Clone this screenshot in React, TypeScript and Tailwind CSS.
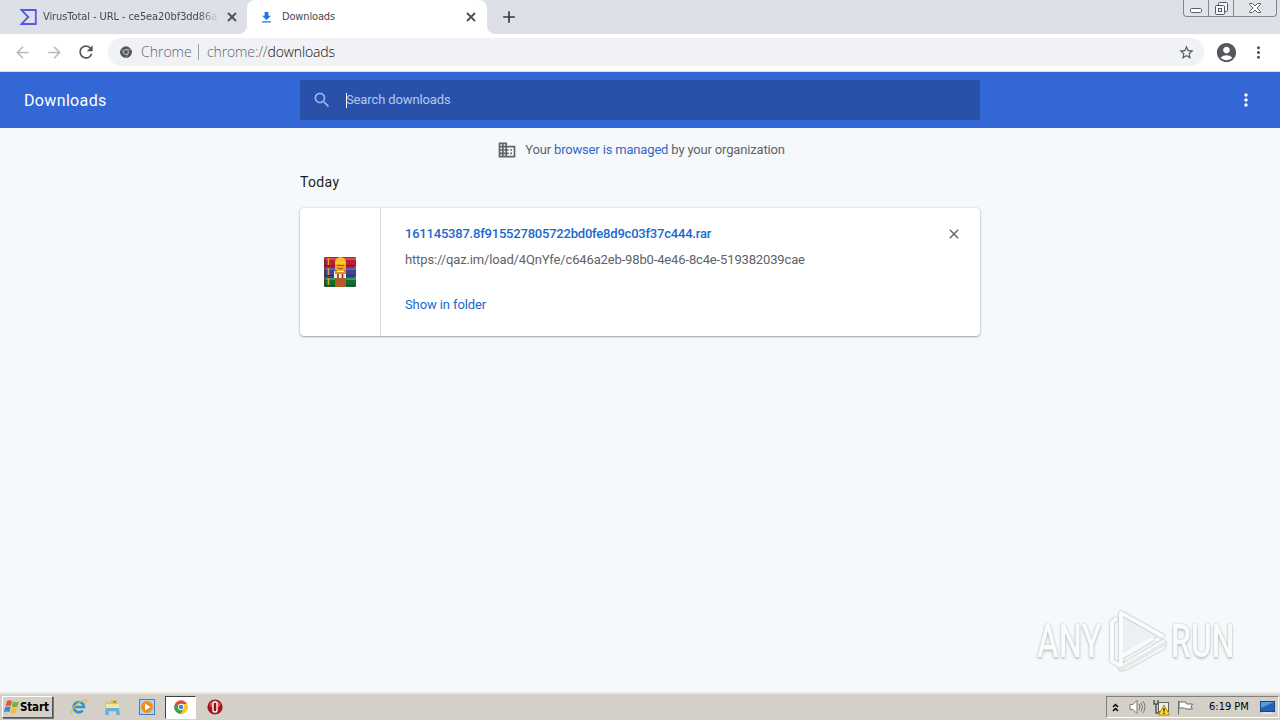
import type { ReactNode } from "react";
import { MdArrowBack, MdArrowForward, MdRefresh, MdStarBorder, MdAccountCircle, MdMoreVert, MdSearch, MdClose, MdAdd, MdFileDownload, MdDomain } from "react-icons/md";

function ChromeLogo({ size, mono }: { size: number; mono?: boolean }) {
  const [red, yellow, green, blue, ring] = mono
    ? ["#54575b", "#54575b", "#54575b", "#54575b", "#d5d8db"]
    : ["#dd4b3e", "#f9cc2e", "#3f9d4c", "#4285d8", "#ffffff"];
  return (
    <svg width={size} height={size} viewBox="0 0 24 24" className="shrink-0">
      <circle cx="12" cy="12" r="11.5" fill={red} />
      <path d="M12 12 L2 6.3 A11.5 11.5 0 0 0 11.3 23.5 L17 14.8Z" fill={green} />
      <path d="M12 12 L17 14.8 L11.3 23.5 A11.5 11.5 0 0 0 22.3 6.8 H12Z" fill={yellow} />
      {mono && <path d="M12 6.8H22.4M7.4 14.7 2.1 5.6M16.6 14.7 11.4 23.5" stroke={ring} strokeWidth="1" />}
      <circle cx="12" cy="12" r="5.4" fill={ring} />
      <circle cx="12" cy="12" r="4" fill={blue} />
    </svg>
  );
}

function TabClose() {
  return (
    <svg width="14" height="14" viewBox="0 0 14 14" className="shrink-0">
      <path d="M3 3 11 11M11 3 3 11" stroke="#4b4e52" strokeWidth="1.8" />
    </svg>
  );
}

function TabStrip() {
  return (
    <div className="flex h-[34px] items-start bg-[#dde0e7] font-['DejaVu_Sans_Condensed','DejaVu_Sans',sans-serif] text-[11px] text-[#45484c]">
      <div className="flex h-[34px] w-[247px] items-center pl-5">
        <svg width="17" height="16" viewBox="0 0 17 16" className="shrink-0">
          <path d="M1.4 1H15.8V15H1.4L8.3 8Z" fill="none" stroke="#5558e3" strokeWidth="1.8" />
        </svg>
        <span className="ml-1.5 w-[176px] pt-px whitespace-nowrap tracking-[-0.08px] mask-r-from-88%">
          VirusTotal - URL - ce5ea20bf3dd86a
        </span>
        <span className="ml-1.5"><TabClose /></span>
      </div>
      <div className="relative flex h-[34px] w-60 items-center rounded-t-lg bg-white pl-3">
        <svg width="8" height="8" className="absolute bottom-0 -left-2">
          <path d="M8 0V8H0A8 8 0 0 0 8 0Z" fill="#fff" />
        </svg>
        <svg width="8" height="8" className="absolute -right-2 bottom-0">
          <path d="M0 0V8H8A8 8 0 0 1 0 0Z" fill="#fff" />
        </svg>
        <MdFileDownload size={15} className="shrink-0 text-[#1a73e8]" />
        <span className="ml-2 w-[182px] pt-px tracking-[-0.15px]">Downloads</span>
        <TabClose />
      </div>
      <div className="flex h-[34px] w-11 items-center justify-center text-[#35383c]">
        <MdAdd size={20} />
      </div>
      <div className="mr-[3px] ml-auto flex h-[17px] w-[94px] rounded-b-[4px] border border-t-0 border-[#83868e] bg-[#e1e4e9]">
        <div className="flex w-[25px] items-end justify-center border-r border-[#83868e] pb-[3px]">
          <svg width="12" height="5">
            <rect x="0.5" y="0.5" width="11" height="4" rx="1" fill="#fff" stroke="#5b5e69" />
          </svg>
        </div>
        <div className="flex w-[25px] items-start justify-center border-r border-[#83868e] pt-[2px]">
          <svg width="13" height="13" fill="#f5f6f8" stroke="#555965">
            <rect x="3.5" y="0.5" width="9" height="9" rx="1" />
            <rect x="0.5" y="3.5" width="9" height="9" rx="1" />
            <rect x="3.5" y="6.5" width="3" height="3" />
          </svg>
        </div>
        <div className="flex flex-1 items-start justify-center pt-[3px]">
          <svg width="12" height="10" viewBox="0 0 12 10">
            <path d="M.5.5H3.5L6 3 8.500.5H11.500V1.500L8 5 11.500 8.500V9.500H8.500L6 7 3.500 9.500H.5V8.500L4 5 .5 1.500Z" fill="#fff" stroke="#5b5e69" />
          </svg>
        </div>
      </div>
    </div>
  );
}

function Toolbar() {
  return (
    <div className="flex h-[38px] items-center border-b border-[#cfe3e8] bg-white pb-px text-[#54575b]">
      <MdArrowBack size={19} className="ml-[13px] text-[#b8babd]" />
      <MdArrowForward size={19} className="ml-[13px] text-[#b8babd]" />
      <MdRefresh size={20} className="ml-[12px]" />
      <div className="ml-3 flex h-7 w-[1096px] items-center rounded-full bg-[#f0f2f5] pl-3 font-['Open_Sans',sans-serif] text-[14px] font-light">
        <ChromeLogo size={12} mono />
        <span className="ml-[9px] w-[50px] pb-0.5 text-[#5f6368]">Chrome</span>
        <span className="ml-[7px] h-4 w-px bg-[#9b9ea2]" />
        <span className="ml-2 pb-0.5 tracking-[-0.12px] text-[#5f6368]">
          chrome://<span className="text-[#111]">downloads</span>
        </span>
        <MdStarBorder size={17} className="mr-[9px] ml-auto" />
      </div>
      <MdAccountCircle size={23} className="ml-[11px]" />
      <MdMoreVert size={19} className="ml-[11px]" />
    </div>
  );
}

function Header() {
  return (
    <div className="flex h-14 items-center bg-[#3367d6] pl-6 text-white">
      <h1 className="w-[276px] pt-0.5 text-[16px] tracking-[0.35px]">Downloads</h1>
      <div className="flex h-10 w-[680px] items-center bg-[#2951aa] pl-3 text-[13px] text-[#b4c8ee]">
        <MdSearch size={20} className="text-[#9bb5ec]" />
        <span className="ml-[14px] h-[15px] w-px bg-white" />
        <span className="-ml-px tracking-[-0.12px]">Search downloads</span>
      </div>
      <MdMoreVert size={20} className="mr-6 ml-auto" />
    </div>
  );
}

function WinRarIcon() {
  return (
    <svg width="32" height="32" viewBox="0 0 32 32">
      <rect y="1" width="32" height="10" rx="1" fill="#b91f35" />
      <rect y="2" width="32" height="2" fill="#dc4856" />
      <rect y="11" width="32" height="10" rx="1" fill="#414391" />
      <rect y="12" width="32" height="2" fill="#6262b5" />
      <rect y="21" width="32" height="10" rx="1" fill="#176b32" />
      <rect y="22" width="32" height="2" fill="#35a04c" />
      <path d="M0 9.500H32M0 19.500H32M0 29.500H32" stroke="#271d3e" strokeOpacity=".55" />
      <path d="M4.500 2V9M4.500 12V19M4.500 22V29" stroke="#d4a336" strokeWidth="1.600" />
      <path d="M1 2V30" stroke="#4b292d" strokeOpacity=".5" strokeWidth="2" />
      <rect x="11" y="20" width="11" height="11" fill="#b45a29" />
      <rect x="11" y="2" width="11" height="14" rx="4" fill="#f2a51e" />
      <path d="M11 8Q12 1 16.500 1T22 8Z" fill="#ffc629" />
      <path d="M13 9.500H20M14 12.500H19" stroke="#9a5620" />
      <path d="M10 15H22V22H10Z" fill="#f6eee4" />
      <path d="M12 14V17H21V14" fill="none" stroke="#e08c24" strokeWidth="2" />
      <path d="M14 18V22M18.500 18V22" stroke="#6c3620" strokeWidth="1.600" />
    </svg>
  );
}

function DownloadCard() {
  return (
    <div className="flex h-32 w-[680px] rounded-[4px] bg-white text-[13px] shadow-[0_1px_2px_rgba(60,64,67,0.4),0_0_2px_rgba(60,64,67,0.25)]">
      <div className="flex w-[81px] items-center justify-center border-r border-[#d9dbde]">
        <WinRarIcon />
      </div>
      <div className="flex flex-1 flex-col pt-[17px] pl-6 leading-[18px]">
        <a className="font-medium tracking-[-0.21px] text-[#1967d2]">161145387.8f915527805722bd0fe8d9c03f37c444.rar</a>
        <span className="mt-2 tracking-[-0.145px] text-[#5f6368]">https://qaz.im/load/4QnYfe/c646a2eb-98b0-4e46-8c4e-519382039cae</span>
        <a className="mt-[27px] tracking-[-0.1px] text-[#1967d2]">Show in folder</a>
      </div>
      <MdClose size={16} className="mt-[18px] mr-[18px] text-[#5f6368]" />
    </div>
  );
}

function AnyRunMark() {
  return (
    <div className="absolute right-[43px] bottom-[19px] flex h-[64px] items-center font-['Roboto',sans-serif] text-[46px] leading-none font-medium text-[#fafbfb] [text-shadow:0_0_2px_#aaadaf,0_2px_3px_#c6c8ca]">
      <span className="w-[65px]"><span className="inline-block origin-left scale-x-[0.71]">ANY</span></span>
      <svg width="62" height="64" viewBox="0 0 62 64" className="mr-[2px] ml-[5px] drop-shadow-[0_0_1px_#a0a3a5]" fill="none" strokeLinejoin="round" strokeLinecap="round">
        <path d="M14 7V48L50 27Z" fill="#edf0f2" />
        <path d="M9 10 L5 13V52L18 59 56 38V33L14 58V48L45 30M14 48V4L55 27" stroke="#fafbfb" strokeWidth="4" />
        <path d="M14 60 57 35" stroke="#e6e8ea" strokeWidth="4" />
      </svg>
      <span className="w-[66px]"><span className="inline-block origin-left scale-x-[0.69]">RUN</span></span>
    </div>
  );
}

function QuickItem({ active, children }: { active?: boolean; children: ReactNode }) {
  return (
    <div className={active
      ? "flex h-[23px] w-[31px] items-center justify-center border border-t-[#404040] border-r-white border-b-white border-l-[#404040] bg-white"
      : "flex h-[23px] w-[31px] items-center justify-center"}>
      {children}
    </div>
  );
}

function Taskbar() {
  return (
    <div className="flex h-7 items-center border-t-2 border-[#e9e7e2] bg-[#d4d0c8] pl-[2px] text-black">
      <div className="flex h-[22px] w-[51px] items-center border border-t-white border-r-[#555] border-b-[#555] border-l-white pl-px font-['DejaVu_Sans_Condensed',sans-serif] text-[11.5px] font-bold tracking-[-0.15px] shadow-[1px_1px_0_#777]">
        <svg width="16" height="16" viewBox="0 0 16 16" className="shrink-0">
          <path d="M3 2Q5 .5 8 2L6.800 7Q4 6 1.500 7Z" fill="#e4572e" />
          <path d="M9 2.500Q12 4 15 2.500L13.500 7.500Q11 9 7.800 7.500Z" fill="#72b043" />
          <path d="M1.300 8Q4 7 6.600 8L5.300 13Q2.500 12 0 13Z" fill="#368ad0" />
          <path d="M7.500 8.500Q10 10 13.200 8.500L11.800 13.500Q9 15 6.200 13.500Z" fill="#f5bd2c" />
        </svg>
        <span className="pt-px">Start</span>
      </div>
      <div className="ml-[10px] flex items-center gap-[3px]">
        <QuickItem>
          <svg width="18" height="18" viewBox="0 0 18 18" fill="none">
            <path d="M4.500 9H14A5.200 5.200 0 1 0 12.800 12.500" stroke="#2f94d2" strokeWidth="2.600" />
            <path d="M2 16C-1 14 7 4 14 2 17 1 17 3 15.500 5" stroke="#e0bb3c" strokeWidth="1.300" />
          </svg>
        </QuickItem>
        <QuickItem>
          <svg width="17" height="17" viewBox="0 0 17 17">
            <path d="M1 3H6L7 1H13V4H15V13H1Z" fill="#dfc16a" />
            <path d="M2 5H15V12H2Z" fill="#f7e79c" />
            <path d="M2 9H15L16 16H12V12H5V16H1Z" fill="#65b3d9" />
            <path d="M9 3H12" stroke="#54a557" strokeWidth="1.500" />
          </svg>
        </QuickItem>
        <QuickItem>
          <svg width="16" height="16" viewBox="0 0 16 16">
            <rect x=".5" y=".5" width="15" height="15" fill="#afd2ed" stroke="#3d82bd" />
            <circle cx="8" cy="8" r="5.700" fill="#f28a16" stroke="#e8a24d" />
            <path d="M6 4.500V11.500L11.500 8Z" fill="#fff" />
          </svg>
        </QuickItem>
        <QuickItem active>
          <ChromeLogo size={14} />
        </QuickItem>
        <QuickItem>
          <svg width="16" height="16" viewBox="0 0 16 16">
            <circle cx="8" cy="8" r="7.600" fill="#9f171c" />
            <path d="M2 5Q8-2 14 5L12 8H4Z" fill="#d94d4d" />
            <rect x="6" y="3" width="4" height="10" rx="1.800" fill="#8d1015" stroke="#fff" strokeWidth="1.400" />
          </svg>
        </QuickItem>
      </div>
      <div className="mr-px ml-auto flex h-[22px] w-[173px] items-center border border-t-[#808080] border-r-white border-b-white border-l-[#808080] pl-[5px] font-['DejaVu_Sans_Condensed',sans-serif] text-[11px]">
        <svg width="7" height="9" viewBox="0 0 7 9" fill="none" stroke="#000" strokeWidth="1.500">
          <path d="M1 4 3.500 1.500 6 4M1 8 3.500 5.500 6 8" />
        </svg>
        <svg width="18" height="16" viewBox="0 0 18 16" fill="none" stroke="#77797c" className="ml-[10px]">
          <path d="M1 5.500H4L8 1.500V14.500L4 10.500H1Z" fill="#fff" />
          <path d="M10 5Q12 8 10 11M12 3.500Q15 8 12 12.500M14 2Q18 8 14 14" />
        </svg>
        <svg width="17" height="17" viewBox="0 0 17 17" className="ml-[6px]">
          <rect x="5.500" y="3.500" width="10" height="9" fill="#edf0e8" stroke="#5f6262" />
          <path d="M1 1V5H5V1M3 5V14H7" fill="none" stroke="#53575a" strokeWidth="1.500" />
          <path d="M11 6 16.500 16H5.500Z" fill="#ffdc28" stroke="#b68b0a" />
          <path d="M11 9V12.500M11 13.500V15" stroke="#222" strokeWidth="1.300" />
        </svg>
        <svg width="17" height="15" viewBox="0 0 17 15" className="ml-[7px]" fill="#fff" stroke="#66696b">
          <path d="M1.500 1V14.500M2 2H8.500L9.500 4H15.500L14 7 15.500 9H8.500L7.500 8H2Z" />
        </svg>
        <span className="ml-[15px] w-[51px] pt-px whitespace-nowrap">6:19 PM</span>
        <svg width="15" height="13" viewBox="0 0 15 13" className="shrink-0">
          <rect x=".5" y=".5" width="14" height="10" fill="#2163b8" stroke="#16468b" />
          <path d="M1 1H14L1 7Z" fill="#559ce0" />
          <path d="M3 12H12" stroke="#d8e6ef" strokeWidth="2" />
        </svg>
      </div>
    </div>
  );
}

export default function App() {
  return (
    <div className="flex h-[720px] w-[1280px] flex-col overflow-hidden bg-[#f6f9fc] font-['Roboto',sans-serif]">
      <TabStrip />
      <Toolbar />
      <Header />
      <main className="relative flex flex-1 flex-col items-center">
        <div className="flex h-[44px] items-center pl-0.5 text-[13px] text-[#5f6368]">
          <MdDomain size={20} className="mr-2" />
          <span className="tracking-[-0.17px]">Your <a className="text-[#3367c6]">browser is managed</a> by your organization</span>
        </div>
        <h2 className="h-9 w-[680px] text-[14px] leading-[21px] tracking-[0.35px] text-[#202124]">Today</h2>
        <DownloadCard />
        <AnyRunMark />
      </main>
      <Taskbar />
    </div>
  );
}
